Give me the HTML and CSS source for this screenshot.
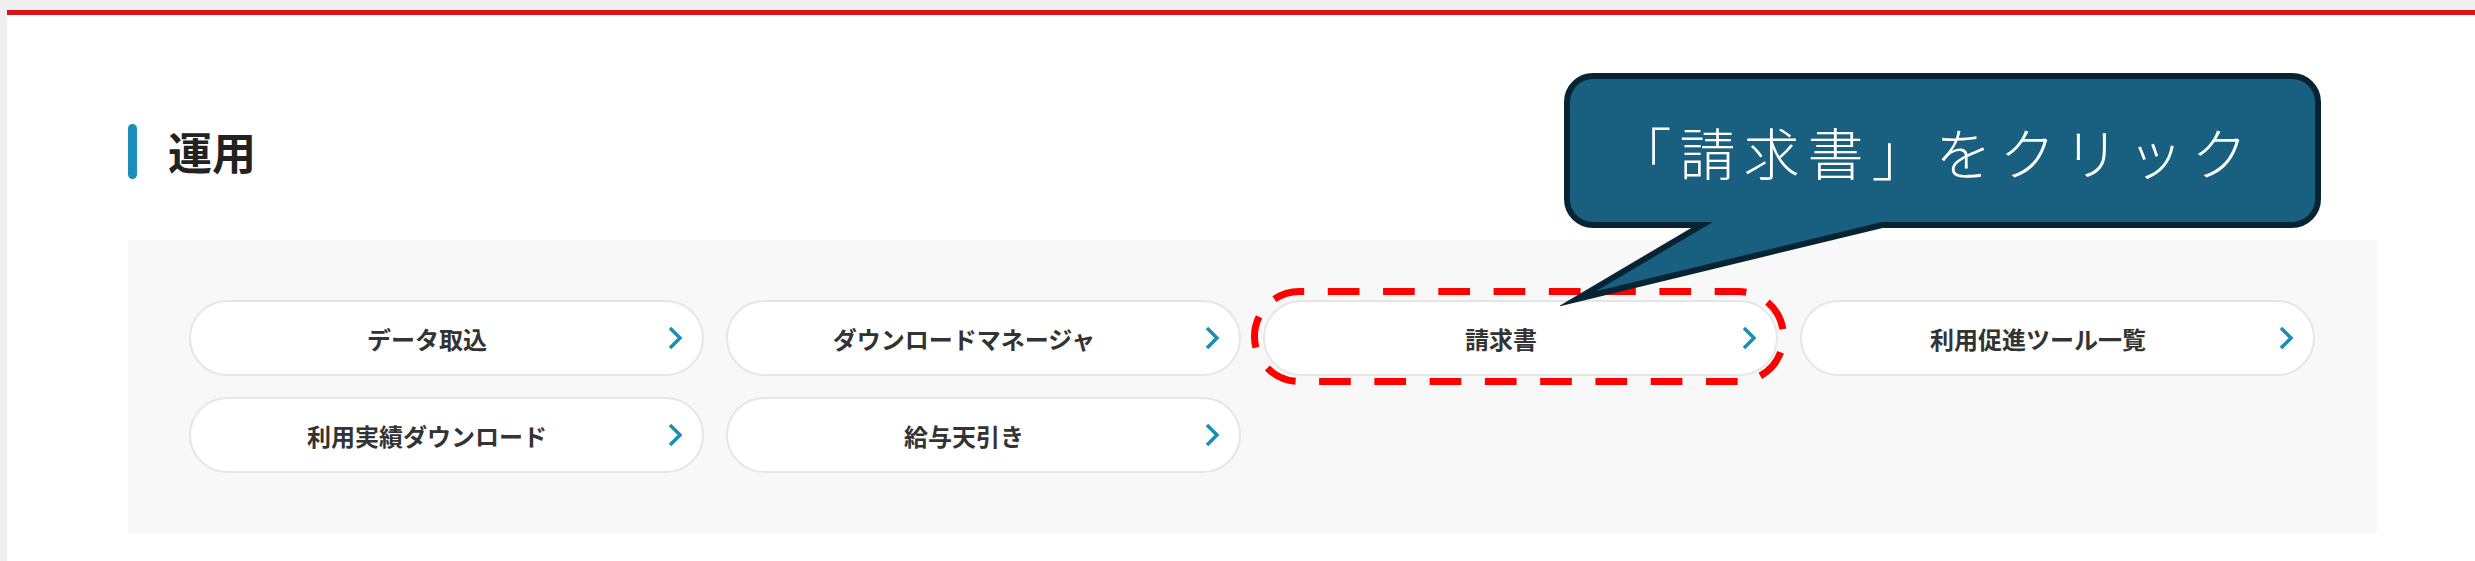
FILE: index.html
```html
<!DOCTYPE html>
<html lang="ja">
<head>
  <meta charset="UTF-8" />
  <meta name="viewport" content="width=device-width, initial-scale=1.0"/>
  <title>運用</title>
  <link rel="stylesheet" href="styles.css">
</head>
<body>

  <div class="page">
    <h2 class="section-title"><span class="bar"></span>運用</h2>

    <div class="menu-panel">
      <a class="menu-btn" href="#"><span class="label">データ取込</span>
        <svg class="chev" width="14" height="24" viewBox="0 0 14 24"><polyline points="2,2 12,12 2,22"/></svg></a>
      <a class="menu-btn" href="#"><span class="label">ダウンロードマネージャ</span>
        <svg class="chev" width="14" height="24" viewBox="0 0 14 24"><polyline points="2,2 12,12 2,22"/></svg></a>
      <a class="menu-btn" href="#"><span class="label">請求書</span>
        <svg class="chev" width="14" height="24" viewBox="0 0 14 24"><polyline points="2,2 12,12 2,22"/></svg></a>
      <a class="menu-btn" href="#"><span class="label">利用促進ツール一覧</span>
        <svg class="chev" width="14" height="24" viewBox="0 0 14 24"><polyline points="2,2 12,12 2,22"/></svg></a>
      <a class="menu-btn" href="#"><span class="label">利用実績ダウンロード</span>
        <svg class="chev" width="14" height="24" viewBox="0 0 14 24"><polyline points="2,2 12,12 2,22"/></svg></a>
      <a class="menu-btn" href="#"><span class="label">給与天引き</span>
        <svg class="chev" width="14" height="24" viewBox="0 0 14 24"><polyline points="2,2 12,12 2,22"/></svg></a>
    </div>
  </div>

  <!-- annotation: highlight + callout -->
  <svg class="highlight" width="540" height="100" viewBox="0 0 540 100">
    <rect x="4.5" y="4.5" width="529" height="90" rx="45" ry="45"/>
  </svg>

  <div class="callout">
    <svg class="callout-shape" width="765" height="240" viewBox="0 0 765 240">
      <path d="M33 6 H732 A26 26 0 0 1 758 32 V129 A26 26 0 0 1 732 155 H322 L17 229 L142 155 H33 A26 26 0 0 1 7 129 V32 A26 26 0 0 1 33 6 Z"/>
    </svg>
    <span class="callout-text">「請求書」をクリック</span>
  </div>

</body>
</html>
```

FILE: styles.css
```css
body {
  margin: 0;
  background: #efefef;
  font-family: "Noto Sans CJK JP", "Noto Sans", sans-serif;
}
.page {
  margin: 10px 0 0 7px;
  border-top: 5px solid #d8141c;
  background: #fff;
  padding: 109px 98px 30px 121px;
  min-height: 400px;
}
.section-title {
  display: flex;
  align-items: center;
  gap: 31px;
  margin: 0 0 61px 0;
  height: 55px;
  font-size: 44px;
  font-weight: bold;
  color: #222;
  line-height: 55px;
}
.section-title .bar {
  width: 9px;
  height: 55px;
  border-radius: 5px;
  background: #1a8fb8;
}
.menu-panel {
  background: #f8f8f8;
  padding: 60px 62px 61px 61px;
  display: grid;
  grid-template-columns: repeat(4, 1fr);
  column-gap: 22px;
  row-gap: 21px;
}
.menu-btn {
  display: flex;
  align-items: center;
  height: 76px;
  box-sizing: border-box;
  padding: 0 20px;
  background: #fff;
  border: 2px solid #e6e6e6;
  border-radius: 38px;
  text-decoration: none;
}
.menu-btn .label {
  flex: 1;
  text-align: center;
  margin-right: 25px;
  font-size: 24px;
  font-weight: bold;
  color: #333;
}
.chev {
  flex: none;
}
.chev polyline {
  fill: none;
  stroke: #1b8eb5;
  stroke-width: 3.5;
}
.highlight {
  position: absolute;
  left: 1250px;
  top: 287px;
}
.highlight rect {
  fill: none;
  stroke: #ff0000;
  stroke-width: 7;
  stroke-dasharray: 31.7 23.57;
  stroke-dashoffset: 27;
}
.callout {
  position: absolute;
  left: 1560px;
  top: 70px;
  width: 765px;
  height: 240px;
}
.callout-shape {
  position: absolute;
  left: 0;
  top: 0;
}
.callout-shape path {
  fill: #185f80;
  stroke: #082433;
  stroke-width: 6;
  stroke-linejoin: miter;
  stroke-miterlimit: 20;
}
.callout-text {
  position: absolute;
  left: 7px;
  top: 6px;
  width: 751px;
  height: 149px;
  box-sizing: border-box;
  padding-right: 14px;
  display: flex;
  align-items: center;
  justify-content: center;
  font-size: 56px;
  font-weight: 300;
  letter-spacing: 8px;
  color: #fff;
}
```
